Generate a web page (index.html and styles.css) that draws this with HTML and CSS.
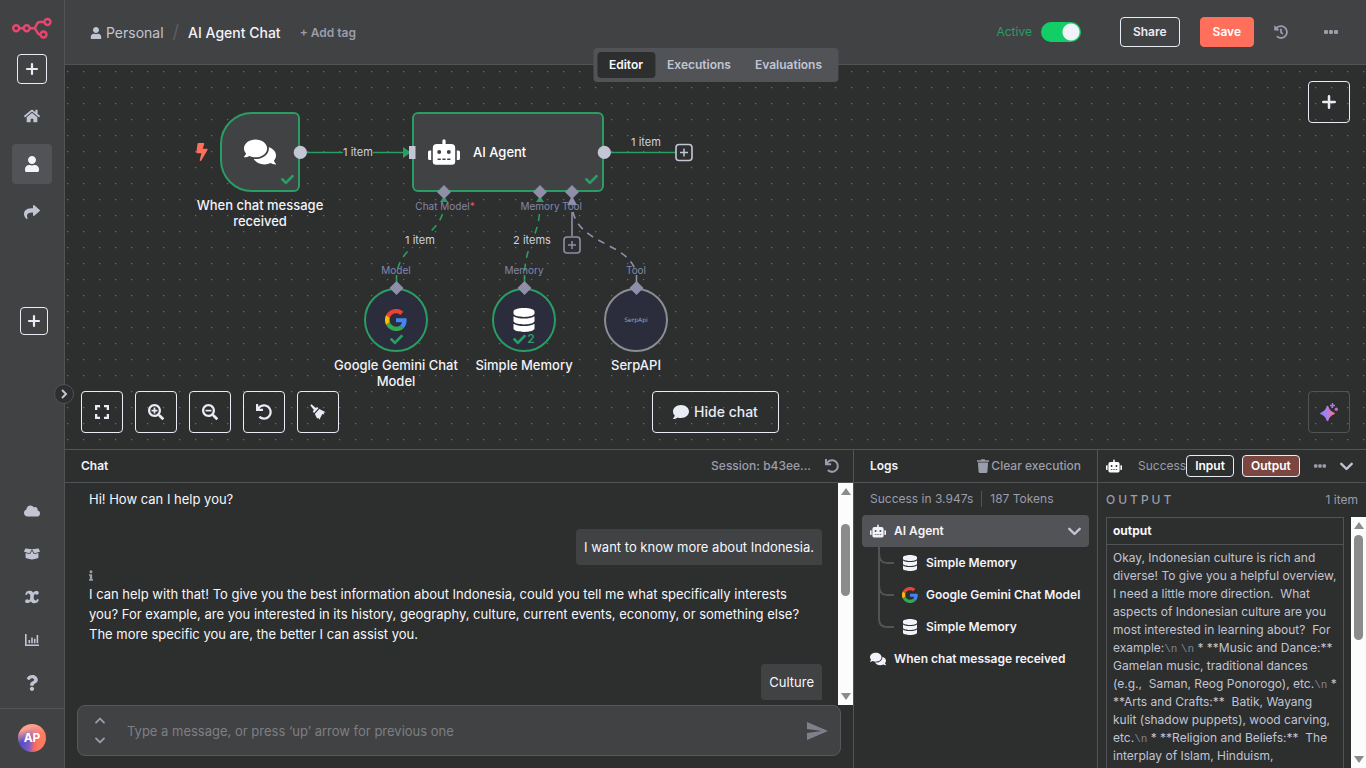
FILE: index.html
```html
<!DOCTYPE html>
<html lang="en">
<head>
<meta charset="utf-8">
<meta name="viewport" content="width=device-width, initial-scale=1">
<title>AI Agent Chat</title>
<link rel="stylesheet" href="styles.css">
</head>
<body>
<svg class="sprite" aria-hidden="true">
  <defs>
    <linearGradient id="spark" x1="0" y1="0" x2="1" y2="0"><stop offset="0" stop-color="#7f86ff"/><stop offset=".5" stop-color="#b07fe8"/><stop offset="1" stop-color="#f0768c"/></linearGradient>
  </defs>
  <symbol id="user" viewBox="0 0 448 512"><path d="M224 256c70.7 0 128-57.3 128-128S294.7 0 224 0 96 57.3 96 128s57.3 128 128 128zm89.6 32h-16.7c-22.2 10.2-46.9 16-72.9 16s-50.6-5.800-72.900-16h-16.700C60.200 288 0 348.200 0 422.400V464c0 26.500 21.500 48 48 48h352c26.500 0 48-21.500 48-48v-41.600c0-74.200-60.200-134.400-134.400-134.400z"/></symbol>
  <symbol id="home" viewBox="0 0 576 512"><path d="M280.37 148.26L96 300.11V464a16 16 0 0 0 16 16l112.06-.29a16 16 0 0 0 15.92-16V368a16 16 0 0 1 16-16h64a16 16 0 0 1 16 16v95.64a16 16 0 0 0 16 16.05L464 480a16 16 0 0 0 16-16V300L295.67 148.26a12.19 12.19 0 0 0-15.3 0zM571.6 251.47L488 182.56V44.05a12 12 0 0 0-12-12h-56a12 12 0 0 0-12 12v72.61L318.47 43a48 48 0 0 0-61 0L4.34 251.47a12 12 0 0 0-1.6 16.9l25.5 31A12 12 0 0 0 45.15 301l235.22-193.74a12.19 12.19 0 0 1 15.3 0L530.9 301a12 12 0 0 0 16.9-1.6l25.5-31a12 12 0 0 0-1.700-16.930z"/></symbol>
  <symbol id="share" viewBox="0 0 512 512"><path d="M503.691 189.836L327.687 37.851C312.281 24.546 288 35.347 288 56.015v80.053C127.371 137.907 0 170.1 0 322.326c0 61.441 39.581 122.309 83.333 154.132 13.653 9.931 33.111-2.533 28.077-18.631C66.066 312.814 132.917 274.316 288 272.085V360c0 20.700 24.300 31.453 39.687 18.164l176.004-152c11.071-9.562 11.086-26.753 0-36.328z"/></symbol>
  <symbol id="cloud" viewBox="0 0 640 512"><path d="M537.6 226.6c4.1-10.7 6.4-22.4 6.4-34.6 0-53-43-96-96-96-19.7 0-38.1 6-53.3 16.2C367 64.2 315.3 32 256 32c-88.4 0-160 71.6-160 160 0 2.7.1 5.4.2 8.1C40.2 219.8 0 273.2 0 336c0 79.5 64.5 144 144 144h368c70.7 0 128-57.3 128-128 0-61.900-44-113.600-102.400-125.400z"/></symbol>
  <symbol id="box" viewBox="0 0 640 512"><path d="M425.7 256c-16.9 0-32.8-9-41.4-23.4L320 126l-64.2 106.6c-8.7 14.5-24.6 23.5-41.5 23.5-4.5 0-9-.6-13.3-1.9L64 215v178c0 14.7 10 27.5 24.2 31l216.2 54.1c10.2 2.5 20.9 2.5 31 0L551.8 424c14.2-3.6 24.2-16.4 24.2-31V215l-137 39.100c-4.300 1.300-8.800 1.900-13.300 1.900zm212.6-112.2L586.8 41c-3.1-6.2-9.8-9.8-16.7-8.900L320 64l91.700 152.100c3.800 6.300 11.400 9.300 18.500 7.300l197.900-56.500c9.900-2.900 14.700-13.900 10.200-23.100zM53.200 41L1.700 143.800c-4.600 9.200.3 20.200 10.100 23l197.900 56.500c7.100 2 14.700-1 18.500-7.300L320 64 69.800 32.100c-6.900-.8-13.500 2.700-16.600 8.900z"/></symbol>
  <symbol id="variable" viewBox="0 0 16 16"><g fill="none" stroke="currentColor" stroke-linecap="round"><path stroke-width="3.400" d="M5.800 3.500C8.300 3 7.800 6 8 8s-.2 5 2.200 4.500"/><path stroke-width="2" d="M2.300 5C2.800 3.500 4 2.700 5.500 2.900M13 3.200C10 2.500 9 5.500 8 8s-2 5.300-5 4.800M13.700 11c-.4 1.500-1.700 2.200-3.200 2"/></g><circle cx="12.900" cy="3.800" r="1.900"/><circle cx="3.100" cy="12.200" r="1.900"/></symbol>
  <symbol id="chart" viewBox="0 0 16 14"><path d="M1 1h1.600v10.500H15V13H1zM4.500 7h1.600v3.300H4.500zM7.200 4.500h1.600v5.800H7.200zM9.900 5.800h1.600v4.500H9.900zM12.600 2h1.600v8.300h-1.600z"/></symbol>
  <symbol id="question" viewBox="0 0 384 512"><path d="M202.021 0C122.202 0 70.503 32.703 29.914 91.026c-7.363 10.580-5.093 25.086 5.178 32.874l43.138 32.709c10.373 7.865 25.132 6.026 33.253-4.148 25.049-31.381 43.630-49.449 82.757-49.449 30.764 0 68.816 19.799 68.816 49.631 0 22.552-18.617 34.134-48.993 51.164-35.423 19.860-82.299 44.576-82.299 106.405V320c0 13.255 10.745 24 24 24h72.471c13.255 0 24-10.745 24-24v-5.773c0-42.860 125.268-44.645 125.268-160.627C377.504 66.256 286.902 0 202.021 0zM192 373.459c-38.196 0-69.271 31.075-69.271 69.271 0 38.195 31.075 69.270 69.271 69.270s69.271-31.075 69.271-69.271-31.075-69.270-69.271-69.270z"/></symbol>
  <symbol id="comments" viewBox="0 0 576 512"><path d="M416 192c0-88.400-93.100-160-208-160S0 103.600 0 192c0 34.300 14.100 65.900 38 92-13.400 30.200-35.500 54.200-35.800 54.500-2.200 2.300-2.800 5.700-1.500 8.700S4.800 352 8 352c36.600 0 66.900-12.300 88.700-25 32.200 15.700 70.300 25 111.300 25 114.900 0 208-71.600 208-160zm122 220c23.900-26 38-57.700 38-92 0-66.900-53.500-124.200-129.300-148.100.9 6.600 1.300 13.300 1.300 20.100 0 105.900-107.700 192-240 192-10.800 0-21.300-.8-31.700-1.900C207.800 439.600 281.800 480 368 480c41 0 79.100-9.200 111.300-25 21.800 12.700 52.100 25 88.700 25 3.200 0 6.100-1.900 7.300-4.800 1.300-2.900.7-6.300-1.500-8.700-.3-.3-22.400-24.200-35.800-54.500z"/></symbol>
  <symbol id="comment" viewBox="0 0 512 512"><path d="M256 32C114.600 32 0 125.100 0 240c0 49.600 21.400 95 57 130.700C44.500 421.100 2.700 466 2.200 466.500c-2.200 2.300-2.800 5.700-1.500 8.700S4.800 480 8 480c66.300 0 116-31.800 140.600-51.400 32.700 12.300 69 19.400 107.400 19.400 141.400 0 256-93.100 256-208S397.400 32 256 32z"/></symbol>
  <symbol id="database" viewBox="0 0 448 512"><path d="M448 73.143v45.714C448 159.143 347.667 192 224 192S0 159.143 0 118.857V73.143C0 32.857 100.333 0 224 0s224 32.857 224 73.143zM448 176v102.857C448 319.143 347.667 352 224 352S0 319.143 0 278.857V176c48.125 33.143 136.208 48.572 224 48.572S399.874 209.143 448 176zm0 160v102.857C448 479.143 347.667 512 224 512S0 479.143 0 438.857V336c48.125 33.143 136.208 48.572 224 48.572S399.874 369.143 448 336z"/></symbol>
  <symbol id="robot" viewBox="0 0 640 512"><path d="M32 224h32v192H32a32 32 0 0 1-32-32V256a32 32 0 0 1 32-32zm512-48v272a64 64 0 0 1-64 64H160a64 64 0 0 1-64-64V176a80 80 0 0 1 80-80h112V32a32 32 0 0 1 64 0v64h112a80 80 0 0 1 80 80zM264 256a40 40 0 1 0-40 40 40 40 0 0 0 40-40zm-8 128h-64v32h64zm96 0h-64v32h64zm104-128a40 40 0 1 0-40 40 40 40 0 0 0 40-40zm-8 128h-64v32h64zm192-128v128a32 32 0 0 1-32 32h-32V224h32a32 32 0 0 1 32 32z"/></symbol>
  <symbol id="check" viewBox="0 0 512 512"><path d="M173.898 439.404l-166.400-166.400c-9.997-9.997-9.997-26.206 0-36.204l36.203-36.204c9.997-9.998 26.207-9.998 36.204 0L192 312.690 432.095 72.596c9.997-9.997 26.207-9.997 36.204 0l36.203 36.204c9.997 9.997 9.997 26.206 0 36.204l-294.400 294.401c-9.998 9.997-26.207 9.997-36.204-.001z"/></symbol>
  <symbol id="bolt" viewBox="0 0 320 512"><path d="M296 160H180.600l42.600-129.800C227.200 15 215.700 0 200 0H56C44 0 33.800 8.900 32.200 20.800l-32 240C-1.700 275.200 9.500 288 24 288h118.700L96.600 482.500c-3.600 15.200 8 29.500 23.300 29.500 8.400 0 16.400-4.400 20.800-12l176-304c9.300-15.900-2.200-36-20.700-36z"/></symbol>
  <symbol id="undo" viewBox="0 0 512 512"><path d="M212.333 224.333H12c-6.627 0-12-5.373-12-12V12C0 5.373 5.373 0 12 0h48c6.627 0 12 5.373 12 12v78.112C117.773 39.279 184.260 7.470 258.175 8.007c136.906.994 246.448 111.623 246.157 248.532C504.041 393.258 393.120 504 256.333 504c-64.089 0-122.496-24.313-166.510-64.215-5.099-4.622-5.334-12.554-.467-17.420l33.967-33.967c4.474-4.474 11.662-4.717 16.401-.525C170.760 415.336 211.580 432 256.333 432c97.268 0 176-78.716 176-176 0-97.267-78.716-176-176-176-58.496 0-110.280 28.476-142.274 72.333h98.274c6.627 0 12 5.373 12 12v48c0 6.627-5.373 12-12 12z"/></symbol>
  <symbol id="history" viewBox="0 0 512 512"><path d="M504 255.531c.253 136.640-111.180 248.372-247.820 248.468-59.015.042-113.223-20.530-155.822-54.911-11.077-8.940-11.905-25.541-1.839-35.607l11.267-11.267c8.609-8.609 22.353-9.551 31.891-1.984C173.062 425.135 212.781 440 256 440c101.705 0 184-82.311 184-184 0-101.705-82.311-184-184-184-48.814 0-93.149 18.969-126.068 49.932l50.754 50.754c10.080 10.080 2.941 27.314-11.313 27.314H24c-8.837 0-16-7.163-16-16V38.627c0-14.254 17.234-21.393 27.314-11.314l49.372 49.372C129.209 34.136 189.552 8 256 8c136.810 0 247.747 110.780 248 247.531zm-180.912 78.784l9.823-12.630c8.138-10.463 6.253-25.542-4.210-33.679L288 256.349V152c0-13.255-10.745-24-24-24h-16c-13.255 0-24 10.745-24 24v135.651l65.409 50.874c10.463 8.137 25.541 6.253 33.679-4.210z"/></symbol>
  <symbol id="zoomin" viewBox="0 0 512 512"><path d="M304 192v32c0 6.600-5.400 12-12 12h-56v56c0 6.600-5.400 12-12 12h-32c-6.600 0-12-5.400-12-12v-56h-56c-6.600 0-12-5.400-12-12v-32c0-6.600 5.400-12 12-12h56v-56c0-6.600 5.400-12 12-12h32c6.600 0 12 5.400 12 12v56h56c6.600 0 12 5.400 12 12zm201 284.700L476.700 505c-9.400 9.400-24.600 9.400-33.900 0L343 405.300c-4.500-4.500-7-10.600-7-17V372c-35.300 27.600-79.700 44-128 44C93.100 416 0 322.900 0 208S93.100 0 208 0s208 93.100 208 208c0 48.300-16.400 92.700-44 128h16.300c6.400 0 12.500 2.500 17 7l99.700 99.700c9.300 9.400 9.300 24.600 0 34zM344 208c0-75.200-60.800-136-136-136S72 132.800 72 208s60.800 136 136 136 136-60.800 136-136z"/></symbol>
  <symbol id="zoomout" viewBox="0 0 512 512"><path d="M304 192v32c0 6.600-5.400 12-12 12H124c-6.600 0-12-5.400-12-12v-32c0-6.600 5.400-12 12-12h168c6.600 0 12 5.400 12 12zm201 284.700L476.700 505c-9.400 9.400-24.600 9.400-33.900 0L343 405.300c-4.500-4.500-7-10.600-7-17V372c-35.300 27.600-79.700 44-128 44C93.100 416 0 322.900 0 208S93.100 0 208 0s208 93.100 208 208c0 48.300-16.400 92.700-44 128h16.300c6.400 0 12.500 2.500 17 7l99.700 99.700c9.300 9.400 9.300 24.600 0 34zM344 208c0-75.200-60.800-136-136-136S72 132.800 72 208s60.800 136 136 136 136-60.800 136-136z"/></symbol>
  <symbol id="info" viewBox="0 0 192 512"><path d="M20 424h20V280H20a20 20 0 0 1-20-20v-48a20 20 0 0 1 20-20h112a20 20 0 0 1 20 20v212h20a20 20 0 0 1 20 20v48a20 20 0 0 1-20 20H20a20 20 0 0 1-20-20v-48a20 20 0 0 1 20-20zM96 0a72 72 0 1 0 0 144A72 72 0 0 0 96 0z"/></symbol>
  <symbol id="plus" viewBox="0 0 14 14"><path d="M7 2v10M2 7h10" fill="none" stroke="currentColor" stroke-width="2.200" stroke-linecap="round"/></symbol>
  <symbol id="expand" viewBox="0 0 14 14"><path d="M0 0h5v2.300H2.300V5H0zM9 0h5v5h-2.300V2.300H9zM0 9h2.300v2.700H5V14H0zM11.700 9H14v5H9v-2.300h2.700z"/></symbol>
  <symbol id="broom" viewBox="0 0 16 16"><path d="M.3 1.400L1.500.2l4.300 3.900 1.200-1.200 1.500 1.400-4.400 4.600-1.400-1.500 1.200-1.500zM9.300 5l6.500 3.300-2.100.3.500 2-1.900-.5-2.900 5.600-1-1.800-1.300.5-2.300-4.500z"/></symbol>
  <symbol id="trash" viewBox="0 0 12 14"><path d="M0 1.200h3.700L4.300.3h3.400l.6.900H12v1.600H0zM.9 3.600h10.200l-.7 9.200c0 .7-.5 1.200-1.200 1.200H2.800c-.7 0-1.200-.5-1.200-1.200z"/></symbol>
  <symbol id="dots" viewBox="0 0 14 4"><rect width="4" height="4" rx="1.200"/><rect x="5" width="4" height="4" rx="1.200"/><rect x="10" width="4" height="4" rx="1.200"/></symbol>
  <symbol id="down" viewBox="0 0 12 8"><path d="M1.200 1.500L6 6.300l4.800-4.800" fill="none" stroke="currentColor" stroke-width="2.200" stroke-linecap="round" stroke-linejoin="round"/></symbol>
  <symbol id="send" viewBox="2 3 21 18"><path d="M2 21l21-9L2 3v7l15 2-15 2z"/></symbol>
  <symbol id="google" viewBox="3 3 42 42"><g transform="translate(2.900 2.900) scale(.88)"><path fill="#ea4335" d="M24 9.500c3.540 0 6.710 1.220 9.210 3.600l6.850-6.850C35.900 2.380 30.470 0 24 0 14.620 0 6.510 5.380 2.560 13.220l7.980 6.190C12.430 13.720 17.740 9.500 24 9.500z"/><path fill="#4285f4" d="M46.980 24.550c0-1.570-.15-3.090-.38-4.550H24v9.020h12.940c-.58 2.960-2.260 5.480-4.780 7.180l7.730 6c4.510-4.180 7.090-10.360 7.090-17.650z"/><path fill="#fbbc05" d="M10.530 28.590c-.48-1.450-.76-2.990-.76-4.590s.27-3.140.76-4.590l-7.980-6.190C.92 16.460 0 20.120 0 24c0 3.880.92 7.540 2.560 10.780l7.970-6.190z"/><path fill="#34a853" d="M24 48c6.480 0 11.930-2.130 15.890-5.810l-7.730-6c-2.150 1.450-4.920 2.300-8.160 2.300-6.260 0-11.570-4.220-13.470-9.910l-7.980 6.190C6.510 42.620 14.620 48 24 48z"/></g></symbol>
  <symbol id="sparkles" viewBox="0 0 18 18"><path fill="url(#spark)" d="M7.500 3.500c1 4 2.500 5.500 6.500 7-4 1.500-5.500 3-6.500 7-1-4-2.500-5.500-6.500-7 4-1.500 5.500-3 6.500-7z" stroke="url(#spark)" stroke-width="1.600" stroke-linejoin="round"/><path d="M12.500 0v5M10 2.500h5" stroke="#a97df0" stroke-width="1.500"/><circle cx="16.300" cy="6.200" r="1.700" fill="#c56bb5"/></symbol>
</svg>

<div class="app">
  <aside class="sidebar">
    <svg class="logo" viewBox="0 0 40 22" role="img" aria-label="n8n"><g fill="none" stroke="#e8466f" stroke-width="2.400"><circle cx="4.200" cy="11.200" r="3"/><circle cx="14.700" cy="11.200" r="3"/><circle cx="35.500" cy="5" r="3"/><circle cx="31.500" cy="17.500" r="3"/><path d="M7.200 11.200h4.500M17.700 11.200h4c3.500 0 1.500-6.200 6-6.200h4.800M21.700 11.200c3.500 0 2 6.300 6.800 6.300"/></g></svg>
    <button class="square create" aria-label="Create"><svg class="i14"><use href="#plus"/></svg></button>
    <nav class="nav">
      <a href="#" class="nav-link" aria-label="Home"><svg class="i16"><use href="#home"/></svg></a>
      <a href="#" class="nav-link current" aria-label="Personal"><svg class="i16"><use href="#user"/></svg></a>
      <a href="#" class="nav-link" aria-label="Shared"><svg class="i16"><use href="#share"/></svg></a>
    </nav>
    <button class="square add-project" aria-label="Add project"><svg class="i14"><use href="#plus"/></svg></button>
    <nav class="nav-bottom">
      <a href="#" aria-label="Admin"><svg class="i16"><use href="#cloud"/></svg></a>
      <a href="#" aria-label="Templates"><svg class="i16"><use href="#box"/></svg></a>
      <a href="#" aria-label="Variables"><svg class="i16"><use href="#variable"/></svg></a>
      <a href="#" aria-label="Insights"><svg class="i16"><use href="#chart"/></svg></a>
      <a href="#" aria-label="Help"><svg class="i16"><use href="#question"/></svg></a>
    </nav>
    <div class="account"><button class="avatar">AP</button></div>
    <button class="expander" aria-label="Expand sidebar"><svg viewBox="0 0 8 10" class="chev"><path d="M2 1l4 4-4 4" fill="none" stroke="currentColor" stroke-width="2"/></svg></button>
  </aside>

  <main class="main">
    <header class="topbar">
      <a href="#" class="crumb"><svg class="i12"><use href="#user"/></svg>Personal</a>
      <span class="slash">/</span>
      <h1 class="name">AI Agent Chat</h1>
      <button class="addtag">+ Add tag</button>
      <div class="actions">
        <label class="active" for="active">Active</label>
        <input id="active" class="toggle" type="checkbox" role="switch" checked>
        <button class="btn share">Share</button>
        <button class="btn save">Save</button>
        <button class="bare history" aria-label="History"><svg class="i14"><use href="#history"/></svg></button>
        <button class="bare more" aria-label="More"><svg class="idots"><use href="#dots"/></svg></button>
      </div>
      <nav class="tabs"><button class="tab on">Editor</button><button class="tab">Executions</button><button class="tab">Evaluations</button></nav>
    </header>

    <section class="canvas" aria-label="Workflow">
      <svg class="grid" aria-hidden="true"><defs><pattern id="dot" width="16" height="16" patternUnits="userSpaceOnUse"><path d="M2 6h1v1h-1z" fill="#6a6b6e"/><path d="M3 6h1v1h-1zM2 7h1v1h-1z" fill="#3e3f40"/></pattern></defs><rect width="100%" height="100%" fill="url(#dot)"/></svg>

      <svg class="trigger-bolt"><use href="#bolt"/></svg>
      <div class="node trigger"><div class="shape"><svg class="i32"><use href="#comments"/></svg><span class="status"><svg class="i13"><use href="#check"/></svg></span></div><div class="label">When chat message received</div></div>
      <div class="node agent"><div class="shape"><svg class="i32"><use href="#robot"/></svg><span>AI Agent</span><span class="status"><svg class="i13"><use href="#check"/></svg></span></div></div>
      <div class="node round gemini"><div class="shape"><svg class="i22"><use href="#google"/></svg><span class="status"><svg class="i13"><use href="#check"/></svg></span></div><div class="label">Google Gemini Chat Model</div></div>
      <div class="node round memory"><div class="shape"><svg class="i24"><use href="#database"/></svg><span class="status"><svg class="i13"><use href="#check"/></svg>2</span></div><div class="label">Simple Memory</div></div>
      <div class="node round serp"><div class="shape"><span class="serp-mark">SerpApi</span></div><div class="label">SerpAPI</div></div>

      <svg class="wires"><g transform="translate(-65 -65)">
        <g fill="none" stroke="#2a9d65" stroke-width="1.600">
          <path d="M306 152.500h98M610 152.500h66M396.500 284v-9M524.500 284v-9"/>
          <path stroke-dasharray="0 11 7 6 7 6 7 6 7 6 7 6 7 30" d="M444 203c0 37-47.500 37-47.500 76M540 203c0 37-15.500 37-15.500 76"/>
        </g>
        <g fill="none" stroke="#8f8fa9" stroke-width="1.600">
          <path d="M572 212v24M636.500 284v-9"/><path stroke-dasharray="0 9 7 6 7 6 7 6 7 6 7 6 7 6 7 30" d="M572 203c0 45 64.500 37 64.500 76"/>
        </g>
        <path fill="#2a9d65" d="M403 147l8 5.500-8 5.500zM444 196l4 6h-8zM540 196l4 6h-8z"/>
        <path fill="#8f8fa9" d="M572 196l5 9h-10z"/>
        <g fill="#c3c7d5"><circle cx="300.300" cy="152.400" r="6.600"/><circle cx="604.300" cy="152.400" r="6.600"/><path d="M409 146h6.500v13H409z"/></g>
        <path fill="#8f8fa9" d="M444 185l7 7-7 7-7-7zM540 185l7 7-7 7-7-7zM572 185l7 7-7 7-7-7zM396.500 281l7 7-7 7-7-7zM524.500 281l7 7-7 7-7-7zM636.500 281l7 7-7 7-7-7z"/>
        <g fill="#2d2e2e"><path d="M343 146h30v13h-30zM405 234h30v13h-30zM514 234h37v13h-37z"/>
          <rect x="676" y="144.500" width="16" height="16" rx="3" stroke="#c3c7d5" stroke-width="1.600"/><rect x="564" y="237" width="16" height="16" rx="3" stroke="#8f8fa9" stroke-width="1.600"/></g>
        <path d="M680 152.500h8M684 148.500v8" stroke="#c3c7d5" stroke-width="1.500"/><path d="M568 245h8M572 241v8" stroke="#8f8fa9" stroke-width="1.500"/>
        <g class="wire-text"><text x="358" y="156">1 item</text><text x="646" y="146">1 item</text><text x="420" y="244">1 item</text><text x="532" y="244">2 items</text></g>
        <g class="port-text"><text x="445" y="210">Chat Model<tspan fill="#f05252">*</tspan></text><text x="540" y="210">Memory</text><text x="572" y="210">Tool</text><text x="396" y="274">Model</text><text x="524" y="274">Memory</text><text x="636" y="274">Tool</text></g>
      </g></svg>

      <button class="tool add-node" aria-label="Add node"><svg class="i16"><use href="#plus"/></svg></button>
      <div class="tools">
        <div class="tool-group">
          <button class="tool" aria-label="Fit view"><svg class="i14"><use href="#expand"/></svg></button>
          <button class="tool" aria-label="Zoom in"><svg class="i16"><use href="#zoomin"/></svg></button>
          <button class="tool" aria-label="Zoom out"><svg class="i16"><use href="#zoomout"/></svg></button>
          <button class="tool" aria-label="Reset zoom"><svg class="i16"><use href="#undo"/></svg></button>
          <button class="tool" aria-label="Tidy up"><svg class="i16"><use href="#broom"/></svg></button>
        </div>
        <button class="tool hide-chat"><svg class="i16"><use href="#comment"/></svg>Hide chat</button>
        <button class="tool assistant" aria-label="Assistant"><svg class="i18"><use href="#sparkles"/></svg></button>
      </div>
    </section>

    <section class="bottom">
      <div class="pane chat">
        <header class="pane-head"><h2>Chat</h2><button class="bare session">Session: b43ee...</button><button class="bare" aria-label="Reset session"><svg class="i14"><use href="#undo"/></svg></button></header>
        <div class="chat-scroll">
          <div class="messages">
            <p class="msg">Hi! How can I help you?</p>
            <p class="msg mine">I want to know more about Indonesia.</p>
            <div class="reply"><svg class="info"><use href="#info"/></svg><p class="msg">I can help with that! To give you the best information about Indonesia, could you tell me what specifically interests you? For example, are you interested in its history, geography, culture, current events, economy, or something else? The more specific you are, the better I can assist you.</p></div>
            <p class="msg mine">Culture</p>
          </div>
          <div class="bar" aria-hidden="true"><i class="up"></i><i class="thumb thumb-chat"></i><i class="dn"></i></div>
        </div>
        <form class="composer">
          <div class="steps"><button type="button" aria-label="Previous message"><svg class="flip"><use href="#down"/></svg></button><button type="button" aria-label="Next message"><svg><use href="#down"/></svg></button></div>
          <input type="text" aria-label="Message" placeholder="Type a message, or press ‘up’ arrow for previous one">
          <button type="button" class="send" aria-label="Send"><svg><use href="#send"/></svg></button>
        </form>
      </div>

      <div class="pane logs">
        <header class="pane-head"><h2>Logs</h2><button class="bare clear"><svg class="i14"><use href="#trash"/></svg>Clear execution</button></header>
        <div class="summary"><span>Success in 3.947s</span><span class="tokens">187 Tokens</span></div>
        <ul class="tree">
          <li class="row selected"><svg class="i16"><use href="#robot"/></svg>AI Agent<svg class="fold"><use href="#down"/></svg></li>
          <li class="row child"><svg class="branch" viewBox="0 0 32 32"><path d="M17 0v32M17 6c0 7 3 10 8 10h7"/></svg><svg class="i16"><use href="#database"/></svg>Simple Memory</li>
          <li class="row child"><svg class="branch" viewBox="0 0 32 32"><path d="M17 0v32M17 6c0 7 3 10 8 10h7"/></svg><svg class="i16"><use href="#google"/></svg>Google Gemini Chat Model</li>
          <li class="row child"><svg class="branch" viewBox="0 0 32 32"><path d="M17 0v8c0 5 3 8 8 8h7"/></svg><svg class="i16"><use href="#database"/></svg>Simple Memory</li>
          <li class="row"><svg class="i16"><use href="#comments"/></svg>When chat message received</li>
        </ul>
      </div>

      <div class="pane output">
        <header class="pane-head"><svg class="i16 bot"><use href="#robot"/></svg><span class="ok">Success</span><button class="btn mini">Input</button><button class="btn mini picked">Output</button><button class="bare more2" aria-label="More"><svg class="idots"><use href="#dots"/></svg></button><button class="bare" aria-label="Collapse"><svg class="fold"><use href="#down"/></svg></button></header>
        <div class="out-title"><h3>OUTPUT</h3><span>1 item</span></div>
        <div class="out-scroll">
          <div class="table-wrap"><table><thead><tr><th>output</th></tr></thead><tbody><tr><td>Okay, Indonesian culture is rich and diverse! To give you a helpful overview, I need a little more direction.  What aspects of Indonesian culture are you most interested in learning about?  For example:<span class="nl">\n</span> <span class="nl">\n</span> * **Music and Dance:**  Gamelan music, traditional dances (e.g.,  Saman, Reog Ponorogo), etc.<span class="nl">\n</span> * **Arts and Crafts:**  Batik, Wayang kulit (shadow puppets), wood carving, etc.<span class="nl">\n</span> * **Religion and Beliefs:**  The interplay of Islam, Hinduism,</td></tr></tbody></table></div>
          <div class="bar" aria-hidden="true"><i class="up"></i><i class="thumb thumb-out"></i><i class="dn"></i></div>
        </div>
      </div>
    </section>
  </main>
</div>
</body>
</html>
```
FILE: styles.css
```css
:root {
  --bg: #2d2e2e;
  --panel: #414244;
  --line: #525356;
  --soft: #c1c5d3;
  --dim: #9a9dab;
  --light: #e9ebf5;
  --green: #2a9d65;
}
* { box-sizing: border-box; }
body {
  margin: 0;
  background: var(--bg);
  color: var(--light);
  font: 12px/16px Inter, "Noto Sans", sans-serif;
}
h1, h2, h3, p, ul { margin: 0; padding: 0; font-size: inherit; }
button, input { font: inherit; color: inherit; margin: 0; padding: 0; background: none; border: 0; }
a { color: inherit; text-decoration: none; }
svg { fill: currentColor; flex: none; }
.sprite { position: absolute; width: 0; height: 0; }
.i12 { width: 12px; height: 12px; }
.i13 { width: 13px; height: 13px; }
.i14 { width: 14px; height: 14px; }
.i16 { width: 16px; height: 16px; }
.i18 { width: 18px; height: 18px; }
.i22 { width: 22px; height: 22px; }
.i24 { width: 24px; height: 24px; }
.i32 { width: 32px; height: 32px; }
.idots { width: 14px; height: 4px; }
.fold { width: 13px; height: 9px; }

.app { display: flex; height: 100vh; overflow: hidden; }

/* Sidebar */
.sidebar {
  position: relative;
  z-index: 2;
  flex: 0 0 65px;
  display: flex;
  flex-direction: column;
  align-items: center;
  background: var(--panel);
  border-right: 1px solid var(--line);
  color: var(--soft);
}
.logo { width: 40px; height: 22px; margin-top: 17px; }
.square {
  display: grid;
  place-items: center;
  width: 30px;
  height: 30px;
  border: 1px solid var(--light);
  border-radius: 4px;
  color: var(--light);
}
.create { margin-top: 15px; }
.nav { display: flex; flex-direction: column; gap: 8px; margin-top: 12px; }
.nav-link { display: grid; place-items: center; width: 40px; height: 40px; border-radius: 4px; }
.current { background: #525356; color: #f2f3fa; }
.add-project { width: 28px; height: 28px; margin: 75px 0 auto 4px; }
.nav-bottom { display: flex; flex-direction: column; gap: 27px; margin-bottom: 17px; }
.nav-bottom a { display: block; height: 16px; }
.account { align-self: stretch; display: grid; place-items: center; padding: 15px 0 16px; border-top: 1px solid var(--line); }
.avatar {
  width: 28px;
  height: 28px;
  border-radius: 50%;
  background: linear-gradient(160deg, #ffa08d 20%, transparent 50%), linear-gradient(95deg, #5b4fc4 20%, #7a5cc4 42%, #f06a68 60%, #ff7a5c 80%);
  color: #fff;
  font-weight: 700;
}
.expander {
  position: absolute;
  right: -10px;
  top: 384px;
  display: grid;
  place-items: center;
  width: 20px;
  height: 20px;
  border: 1px solid var(--line);
  border-radius: 50%;
  background: var(--bg);
}
.chev { width: 8px; height: 10px; }

/* Top bar */
.main { flex: 1; min-width: 0; display: flex; flex-direction: column; }
.topbar {
  position: relative;
  z-index: 1;
  display: flex;
  align-items: center;
  height: 65px;
  padding: 0 24px 0 25px;
  background: var(--panel);
  border-bottom: 1px solid var(--line);
}
.crumb, .name, .addtag { padding-top: 2px; }
.crumb { display: flex; align-items: center; gap: 4px; color: var(--soft); font-size: 14px; }
.slash { margin: 0 9px; color: #5d5e62; font-size: 18px; }
.name { font-size: 14px; font-weight: 500; color: #f2f3fa; }
.addtag { margin-left: 19px; color: var(--dim); font-weight: 600; }
.actions { display: flex; align-items: center; margin-left: auto; }
.active { color: var(--green); font-size: 12px; margin-right: 9px; }
.toggle {
  appearance: none;
  width: 40px;
  height: 20px;
  border-radius: 10px;
  background: radial-gradient(circle at 30px 10px, #f2f3fa 8px, transparent 9px), #13ce66;
}
.btn { border: 1px solid var(--light); border-radius: 4px; font-weight: 600; }
.share { margin-left: 39px; padding: 6px 12px; }
.save { margin-left: 20px; padding: 6px 12px; background: #ff6f5c; border-color: #ff6f5c; color: #fff; }
.bare { display: flex; align-items: center; color: var(--dim); }
.history { margin-left: 20px; }
.more { margin: 0 4px 0 36px; }
.tabs {
  position: absolute;
  top: 48px;
  left: 50%;
  transform: translateX(-50%);
  display: flex;
  padding: 4px;
  border-radius: 4px;
  background: #525356;
}
.tab { padding: 5px 12px; border-radius: 4px; color: var(--soft); font-weight: 600; }
.on { background: var(--bg); color: #f6f7fc; }

/* Workflow canvas */
.canvas { position: relative; flex: 1; min-height: 0; overflow: hidden; }
.grid, .wires { position: absolute; inset: 0; width: 100%; height: 100%; }
.wires { pointer-events: none; }
.wire-text { fill: #d0d3df; font-size: 11px; text-anchor: middle; }
.port-text { fill: #8487ab; font-size: 10px; text-anchor: middle; }
.trigger-bolt { position: absolute; left: 131px; top: 78px; width: 12px; height: 18px; color: #ff6f5c; }
.node { position: absolute; width: 140px; display: flex; flex-direction: column; align-items: center; gap: 5px; }
.shape {
  position: relative;
  display: flex;
  align-items: center;
  justify-content: center;
  width: 80px;
  height: 80px;
  border: 2px solid var(--green);
  border-radius: 6px;
  background: var(--panel);
  color: #fff;
}
.label { color: #f2f3fa; font-size: 13px; font-weight: 500; text-align: center; }
.status { position: absolute; right: 4px; bottom: 4px; display: flex; align-items: center; gap: 1px; color: var(--green); line-height: 14px; font-weight: 600; }
.trigger { left: 125px; top: 47px; }
.trigger .shape { border-radius: 32px 6px 6px 32px; }
.agent { left: 347px; top: 47px; width: 192px; }
.agent .shape { width: 100%; justify-content: flex-start; gap: 13px; padding-left: 14px; font-size: 13px; font-weight: 500; }
.round { top: 223px; }
.round .shape { width: 64px; height: 64px; border-radius: 50%; background: #2c2d3c; }
.round .status { right: 0; left: 0; bottom: 4px; justify-content: center; }
.gemini { left: 261px; }
.memory { left: 389px; }
.serp { left: 501px; }
.serp .shape { border-color: #8c8c93; }
.serp-mark { color: #a3a4ac; font: 6px/8px "DejaVu Sans", sans-serif; }
.tools {
  position: absolute;
  inset: auto 16px 16px;
  display: grid;
  grid-template-columns: 1fr auto 1fr;
}
.tool-group { display: flex; gap: 12px; }
.tool {
  display: flex;
  align-items: center;
  justify-content: center;
  width: 42px;
  height: 42px;
  border: 1px solid var(--light);
  border-radius: 4px;
}
.hide-chat { width: auto; gap: 5px; padding: 0 20px; font-size: 14px; font-weight: 500; }
.assistant { justify-self: end; border-color: var(--line); }
.add-node { position: absolute; top: 16px; right: 16px; }

/* Bottom panels */
.bottom {
  flex: 0 0 319px;
  min-height: 0;
  display: grid;
  grid-template-columns: 789fr 244fr 268fr;
  grid-template-rows: minmax(0, 1fr);
  border-top: 1px solid var(--line);
}
.pane { display: flex; flex-direction: column; min-width: 0; min-height: 0; overflow: hidden; }
.chat, .logs { border-right: 1px solid var(--line); }
.pane-head {
  flex: 0 0 33px;
  display: flex;
  align-items: center;
  padding: 0 14px 0 16px;
  border-bottom: 1px solid var(--line);
}
.pane-head h2 { margin-right: auto; font-weight: 600; color: #f2f3fa; }
.session { margin-right: 14px; font-weight: 500; }
.chat-scroll, .out-scroll { flex: 1; min-height: 0; display: flex; overflow: hidden; }
.messages { flex: 1; display: flex; flex-direction: column; gap: 20px; padding: 6px 16px 0 24px; font-size: 13px; line-height: 20px; color: #f6f7fc; }
.mine { align-self: flex-end; padding: 8px; border-radius: 4px 4px 0 4px; background: var(--panel); }
.reply { display: flex; flex-direction: column; gap: 3px; margin-top: -15px; padding-right: 16px; }
.info { width: 4px; height: 11px; color: var(--dim); }
.bar { flex: none; display: flex; flex-direction: column; align-items: center; width: 15px; padding: 5px 0; background: #fcfcfc; }
.up, .dn { border: 5px solid transparent; }
.up { border-top-width: 0; border-bottom: 7px solid #8b8b8b; }
.dn { border-bottom-width: 0; border-top: 7px solid #8b8b8b; margin-top: auto; }
.thumb { width: 9px; border-radius: 5px; background: #8b8b8b; }
.thumb-chat { height: 72px; margin-top: 29px; }
.thumb-out { height: 105px; margin-top: 6px; }
.composer {
  display: flex;
  align-items: center;
  margin: 0 12px 12px;
  padding: 11px 12px;
  border: 1px solid #57585b;
  border-radius: 8px;
  background: var(--panel);
}
.steps { display: flex; flex-direction: column; gap: 13px; width: 20px; align-items: center; color: var(--dim); }
.steps button { display: flex; }
.steps svg { width: 10px; height: 7px; }
.flip { transform: rotate(180deg); }
.composer input { flex: 1; min-width: 0; margin-left: 17px; font-size: 13px; line-height: 20px; outline: 0; }
.composer input::placeholder { color: #7e7f83; opacity: 1; }
.send svg { display: block; width: 21px; height: 18px; color: #7e818c; }

.logs .pane-head { padding-right: 16px; }
.clear { gap: 1px; font-weight: 500; }
.summary { display: flex; padding: 8px 16px; color: var(--dim); }
.tokens { margin-left: 8px; padding-left: 8px; border-left: 1px solid var(--line); }
.tree { list-style: none; padding: 0 8px; }
.row { display: flex; align-items: center; gap: 8px; height: 32px; padding: 0 8px; border-radius: 4px; color: #f2f3fa; font-weight: 600; }
.selected { background: #525356; }
.selected .fold { margin-left: auto; color: var(--soft); }
.child { padding-left: 0; }
.branch { width: 32px; height: 32px; fill: none; stroke: var(--line); stroke-width: 2; }

.output .pane-head { padding: 0 14px 0 8px; }
.bot { margin-right: 16px; color: #fff; }
.ok { color: var(--dim); flex: 1; }
.mini { padding: 2px 8px; line-height: 16px; color: #fff; }
.picked { margin-left: 8px; background: #7b463f; }
.more2 { margin: 0 14px; }
.more2 svg { width: 12px; }
.output .pane-head .fold { color: var(--soft); }
.out-title { display: flex; justify-content: space-between; align-items: center; padding: 9px 8px; color: var(--dim); }
.out-title h3 { font-weight: 500; letter-spacing: 3px; }
.out-scroll { padding-left: 8px; }
.table-wrap { flex: 1; min-width: 0; padding-right: 7px; }
table { width: 100%; border-collapse: collapse; line-height: 18px; }
th, td { border: 1px solid var(--line); padding: 4px 6px; text-align: left; }
th { color: #f6f7fc; font-weight: 700; }
td { color: var(--soft); white-space: pre-wrap; }
.nl { color: #7f8290; font: 11px/11px "Liberation Mono", monospace; }
```
